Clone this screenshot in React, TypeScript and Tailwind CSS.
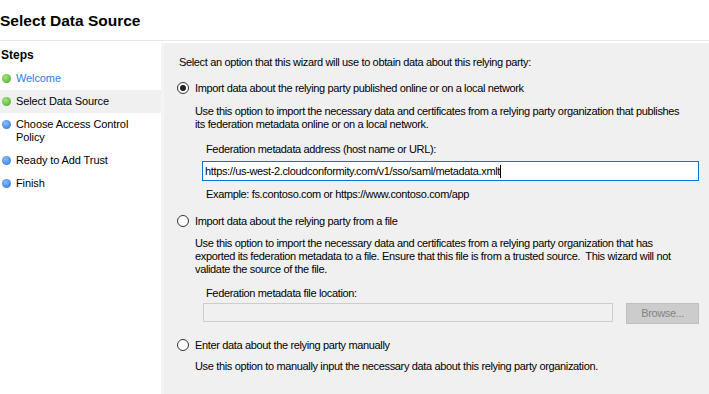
import React from "react";

function Radio({ checked }: { checked?: boolean }) {
  return (
    <span className="w-[12px] h-[12px] rounded-full border border-[#333] bg-white flex items-center justify-center shrink-0">
      {checked && <span className="w-[6px] h-[6px] rounded-full bg-[#222]" />}
    </span>
  );
}

function Dot({ color }: { color: "green" | "blue" }) {
  return (
    <span
      className={
        color === "green"
          ? "w-[9px] h-[9px] rounded-full bg-[radial-gradient(circle_at_40%_35%,#a6e67c,#3ea51c)] shrink-0"
          : "w-[9px] h-[9px] rounded-full bg-[radial-gradient(circle_at_40%_35%,#8dbcf5,#1f6fe0)] shrink-0"
      }
    />
  );
}

const steps = [
  { label: "Welcome", dot: "green", link: true },
  { label: "Select Data Source", dot: "green", active: true },
  { label: "Choose Access Control\nPolicy", dot: "blue" },
  { label: "Ready to Add Trust", dot: "blue" },
  { label: "Finish", dot: "blue" },
] as const;

export default function App() {
  return (
    <div className="w-[709px] h-[394px] bg-white overflow-hidden text-[11px] tracking-[-0.35px] text-black font-['Liberation_Sans',Arial,sans-serif] flex flex-col">
      <header className="h-[41px] shrink-0 border-b border-[#e6e6e6] pt-[12px]">
        <h1 className="text-[15.5px] tracking-normal font-bold leading-[18px]">Select Data Source</h1>
      </header>

      <div className="flex flex-1 min-h-0 pt-[2px]">
        {/* steps */}
        <aside className="w-[164px] shrink-0 bg-white border-r-[3px] border-[#f4f4f4] pt-[3px]">
          <div className="font-bold text-[12px] tracking-normal h-[18px] leading-[18px] pl-[1px] mb-[3px]">Steps</div>
          {steps.map((s) => (
            <div
              key={s.label}
              className={
                "flex items-start gap-[5px] pl-[2px] py-[5px] leading-[13px] text-[11px] tracking-[-0.1px] " +
                ("active" in s && s.active ? "bg-[#f0f0f0]" : "")
              }
            >
              <span className="h-[13px] flex items-center">
                <Dot color={s.dot} />
              </span>
              <span className={"whitespace-pre-line " + ("link" in s && s.link ? "text-[#2f7de1]" : "")}>{s.label}</span>
            </div>
          ))}
        </aside>

        {/* options */}
        <main className="flex-1 bg-[#f0f0f0] pl-[13px] pr-[10px] pt-[12px] whitespace-nowrap">
          <p className="leading-[14px] pl-[2px]">Select an option that this wizard will use to obtain data about this relying party:</p>

          <label className="flex items-center gap-[6px] mt-[12px] leading-[14px]">
            <Radio checked />
            <span>Import data about the relying party published online or on a local network</span>
          </label>
          <div className="pl-[18px] mt-[10px]">
            <p className="leading-[13px]">
              Use this option to import the necessary data and certificates from a relying party organization that publishes
              <br />
              its federation metadata online or on a local network.
            </p>
            <div className="pl-[7px] mt-[11px]">
              <div className="leading-[14px] pl-[4px]">Federation metadata address (host name or URL):</div>
              <div className="mt-[5px] h-[20px] border border-[#0078d7] bg-white flex items-center pl-[2px]">
                <span>https://us-west-2.cloudconformity.com/v1/sso/saml/metadata.xmlt</span>
                <span className="w-[1px] h-[13px] bg-black" />
              </div>
              <div className="leading-[14px] pl-[4px] mt-[6px]">Example: fs.contoso.com or https://www.contoso.com/app</div>
            </div>
          </div>

          <label className="flex items-center gap-[6px] mt-[13px] leading-[14px]">
            <Radio />
            <span>Import data about the relying party from a file</span>
          </label>
          <div className="pl-[18px] mt-[9px]">
            <p className="leading-[13px]">
              Use this option to import the necessary data and certificates from a relying party organization that has
              <br />
              exported its federation metadata to a file. Ensure that this file is from a trusted source.&nbsp; This wizard will not
              <br />
              validate the source of the file.
            </p>
            <div className="pl-[8px] mt-[10px]">
              <div className="leading-[14px] pl-[3px]">Federation metadata file location:</div>
              <div className="mt-[3px] flex items-start gap-[13px]">
                <div className="flex-1 h-[19px] border border-[#cccccc] bg-[#f0f0f0]" />
                <button className="w-[73px] h-[21px] border border-[#bfbfbf] bg-[#cccccc] text-[#838383] leading-[19px]">
                  Browse...
                </button>
              </div>
            </div>
          </div>

          <label className="flex items-center gap-[6px] mt-[14px] leading-[14px]">
            <Radio />
            <span>Enter data about the relying party manually</span>
          </label>
          <p className="pl-[18px] mt-[8px] leading-[13px]">
            Use this option to manually input the necessary data about this relying party organization.
          </p>
        </main>
      </div>
    </div>
  );
}
